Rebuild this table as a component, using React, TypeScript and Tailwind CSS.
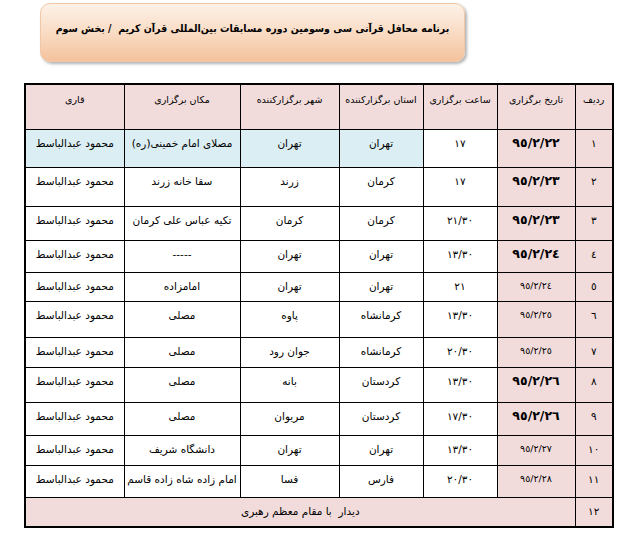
import React from "react";

type Row = {
  n: string;
  date: string;
  bold: boolean;
  time: string;
  province: string;
  city: string;
  place: string;
  blue?: boolean;
};

const reciter = "محمود عبدالباسط";

const rows: Row[] = [
  { n: "۱", date: "۹٥/۲/۲۲", bold: true, time: "۱۷", province: "تهران", city: "تهران", place: "مصلای امام خمینی(ره)", blue: true },
  { n: "۲", date: "۹٥/۲/۲۳", bold: true, time: "۱۷", province: "کرمان", city: "زرند", place: "سقا خانه زرند" },
  { n: "۳", date: "۹٥/۲/۲۳", bold: true, time: "۲۱/۳۰", province: "کرمان", city: "کرمان", place: "تکیه عباس علی کرمان" },
  { n: "٤", date: "۹٥/۲/۲٤", bold: true, time: "۱۳/۳۰", province: "تهران", city: "تهران", place: "-----" },
  { n: "٥", date: "۹٥/۲/۲٤", bold: false, time: "۲۱", province: "تهران", city: "تهران", place: "امامزاده" },
  { n: "٦", date: "۹٥/۲/۲٥", bold: false, time: "۱۳/۳۰", province: "کرمانشاه", city: "پاوه", place: "مصلی" },
  { n: "۷", date: "۹٥/۲/۲٥", bold: false, time: "۲۰/۳۰", province: "کرمانشاه", city: "جوان رود", place: "مصلی" },
  { n: "۸", date: "۹٥/۲/۲٦", bold: true, time: "۱۳/۳۰", province: "کردستان", city: "بانه", place: "مصلی" },
  { n: "۹", date: "۹٥/۲/۲٦", bold: true, time: "۱۷/۳۰", province: "کردستان", city: "مریوان", place: "مصلی" },
  { n: "۱۰", date: "۹٥/۲/۲۷", bold: false, time: "۱۳/۳۰", province: "تهران", city: "تهران", place: "دانشگاه شریف" },
  { n: "۱۱", date: "۹٥/۲/۲۸", bold: false, time: "۲۰/۳۰", province: "فارس", city: "فسا", place: "امام زاده شاه زاده قاسم" },
];

const heights = ["h-[38px]", "h-[39px]", "h-[34px]", "h-[32px]", "h-[29px]", "h-[36px]", "h-[30px]", "h-[35px]", "h-[33px]", "h-[30px]", "h-[32px]"];

const cell = "border border-black align-top text-center pt-[5px] leading-[16px]";

export default function App() {
  return (
    <div className="w-[642px] h-[537px] bg-white text-black font-['DejaVu_Sans',sans-serif]" dir="rtl">
      <div className="pt-[3px] pl-[40px] flex" dir="ltr">
        <div className="w-[425px] shrink-0 h-[59px] rounded-[10px] bg-gradient-to-b from-[#fdf1e8] via-[#f9dcc4] to-[#f4c29c] shadow-[2px_2px_3px_rgba(0,0,0,0.3)] border border-[#f0c8a8] flex justify-center pt-[14px]">
          <span dir="rtl" className="font-['DejaVu_Sans_Condensed','DejaVu_Sans',sans-serif] text-[10.5px] font-bold leading-[20px] whitespace-nowrap">
            برنامه محافل قرآنی سی وسومین دوره مسابقات بین‌المللی قرآن کریم &nbsp;/ بخش سوم
          </span>
        </div>
      </div>
      <div className="pt-[21px] pl-[24px] flex" dir="ltr">
        <table dir="rtl" className="table-fixed w-[588px] border-collapse border-2 border-black text-[10.5px]">
          <colgroup>
            <col className="w-[38px]" />
            <col className="w-[78px]" />
            <col className="w-[74px]" />
            <col className="w-[84px]" />
            <col className="w-[99px]" />
            <col className="w-[116px]" />
            <col className="w-[99px]" />
          </colgroup>
          <thead>
            <tr className="h-[45px] bg-[#f2dcdb]">
              {["ردیف", "تاریخ برگزاری", "ساعت برگزاری", "استان برگزارکننده", "شهر برگزارکننده", "مکان برگزاری", "قاری"].map((h) => (
                <th key={h} className="border border-black align-top text-center font-normal pt-[7px] leading-[16px] text-[9.5px] whitespace-nowrap">
                  {h}
                </th>
              ))}
            </tr>
          </thead>
          <tbody>
            {rows.map((r, i) => {
              const side = r.blue ? "bg-[#daeef3]" : "bg-white";
              return (
                <tr key={r.n} className={heights[i]}>
                  <td className={`${cell} bg-[#f2dcdb]`}>{r.n}</td>
                  <td className={`${cell} bg-[#f2dcdb] ${r.bold ? "font-bold text-[12.5px]" : "text-[9.5px]"}`}>
                    <span dir="ltr">{r.date}</span>
                  </td>
                  <td className={`${cell} bg-white`}>{r.time}</td>
                  <td className={`${cell} ${side}`}>{r.province}</td>
                  <td className={`${cell} ${side}`}>{r.city}</td>
                  <td className={`${cell} ${side} whitespace-nowrap`}>{r.place}</td>
                  <td className={`${cell} ${side} whitespace-nowrap`}>{reciter}</td>
                </tr>
              );
            })}
            <tr className="h-[30px]">
              <td className={`${cell} bg-[#f2dcdb]`}>۱۲</td>
              <td colSpan={6} className={`${cell} bg-[#f2dcdb]`}>
                دیدار &nbsp;با مقام معظم رهبری
              </td>
            </tr>
          </tbody>
        </table>
      </div>
    </div>
  );
}
